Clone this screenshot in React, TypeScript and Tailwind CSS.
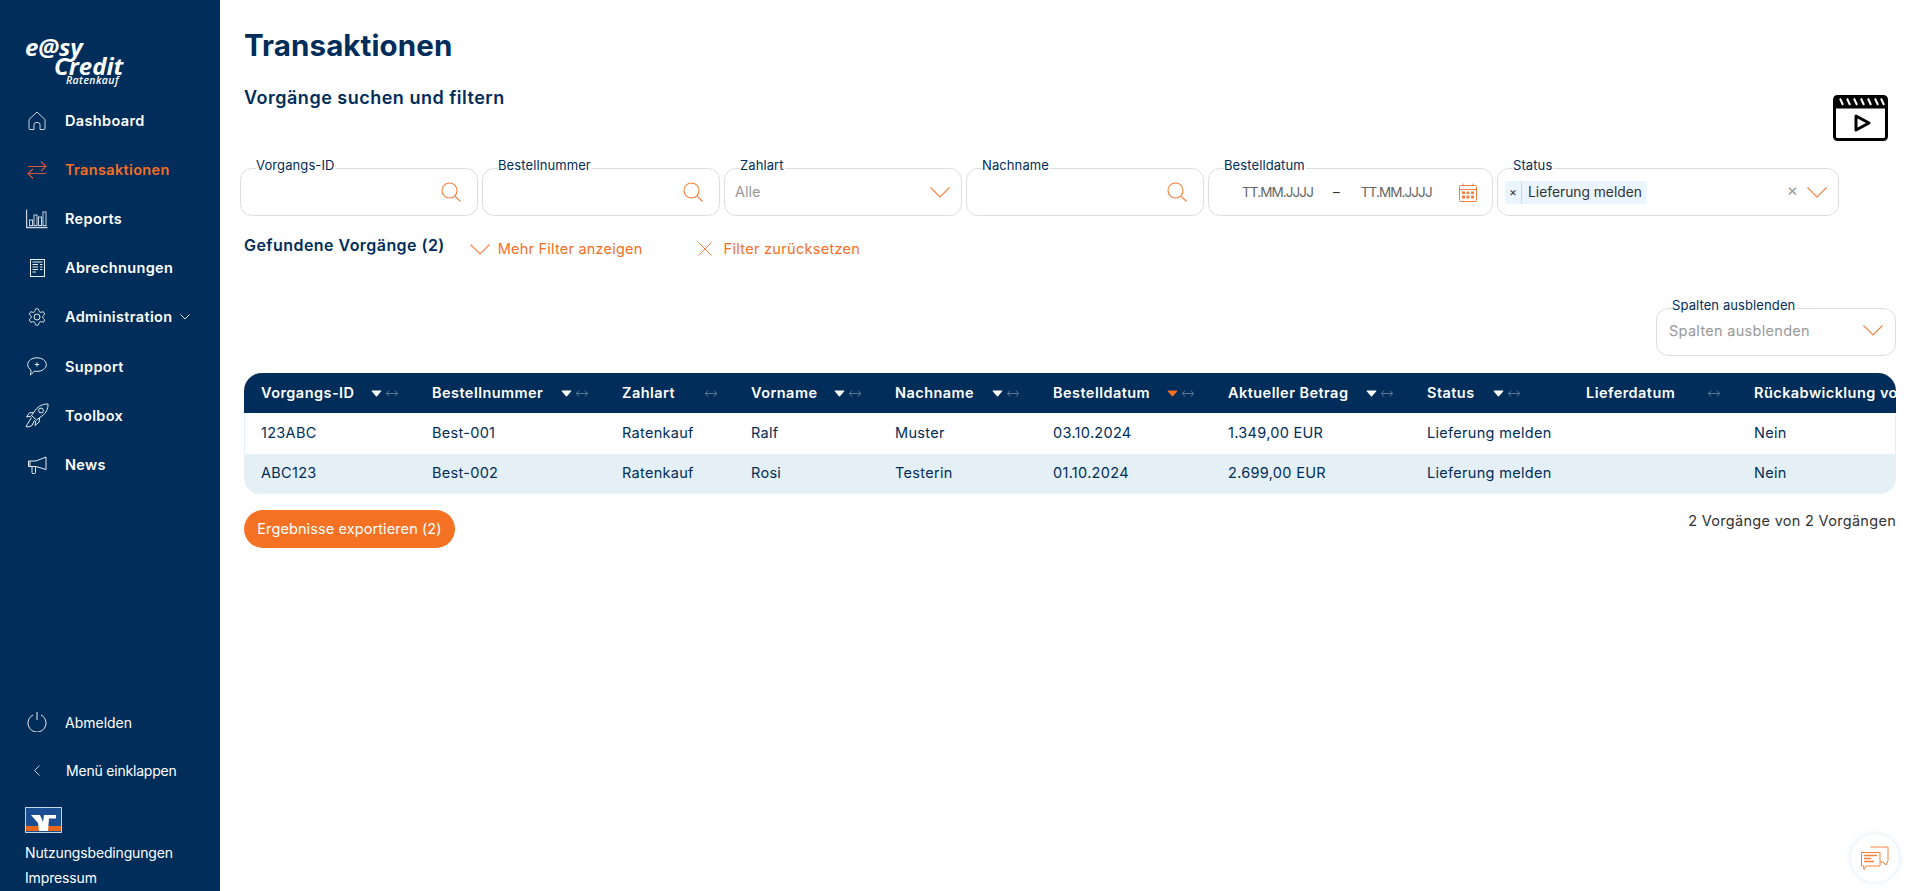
import { ReactNode } from "react";

const font = { fontFamily: "Inter, 'Noto Sans', sans-serif" };

function Chevron({ className = "" }: { className?: string }) {
  return (
    <svg viewBox="0 0 20 11" className={`h-[11px] w-5 ${className}`} fill="none" stroke="#F5803E" strokeWidth="1.1">
      <path d="M0.5 0.5 L10 10 L19.5 0.5" />
    </svg>
  );
}

function SearchIcon() {
  return (
    <svg viewBox="0 0 20 20" className="h-5 w-5" fill="none" stroke="#F5803E" strokeWidth="1.1">
      <circle cx="8.5" cy="8.5" r="7.5" />
      <path d="M13.8 13.8 L19.5 19.5" />
    </svg>
  );
}

function CalendarIcon() {
  return (
    <svg viewBox="0 0 18 19" className="h-[19px] w-[18px]" fill="none" stroke="#F5803E" strokeWidth="1">
      <rect x="0.5" y="2.5" width="17" height="16" rx="1" />
      <path d="M0.5 6.5 H17.5 M4 0.5 V3 M14 0.5 V3" />
      <g fill="#F5803E" stroke="none">
        <rect x="3" y="8.5" width="3" height="2.5" />
        <rect x="7.5" y="8.5" width="3" height="2.5" />
        <rect x="12" y="8.5" width="3" height="2.5" />
        <rect x="3" y="12.5" width="3" height="3" />
        <rect x="7.5" y="12.5" width="3" height="3" />
        <rect x="12" y="12.5" width="3" height="3" />
      </g>
    </svg>
  );
}

const navIcons: Record<string, ReactNode> = {
  home: (
    <svg viewBox="0 0 20 20" className="h-5 w-5" fill="none" stroke="#C9D4E0" strokeWidth="1">
      <path d="M2 8.5 L10 1 L18 8.5 V17.5 Q18 18.5 17 18.5 H13 V13 Q13 11.5 10 11.5 Q7 11.5 7 13 V18.5 H3 Q2 18.5 2 17.5 Z" />
    </svg>
  ),
  swap: (
    <svg viewBox="0 0 20 20" className="h-5 w-5" fill="none" stroke="#D4583A" strokeWidth="1.1">
      <path d="M1 6.5 H19 M14 1.5 L19 6.5 L14 11 M19 13.5 H1 M6 9 L1 13.5 L6 18.5" />
    </svg>
  ),
  reports: (
    <svg viewBox="0 0 22 20" className="h-5 w-[22px]" fill="none" stroke="#C9D4E0" strokeWidth="1">
      <path d="M0.5 0.5 V18.5 H21.5" strokeWidth="1.4" />
      <rect x="3.5" y="11" width="3" height="5.5" />
      <rect x="8" y="6" width="3" height="10.5" />
      <rect x="12.5" y="8" width="3" height="8.5" />
      <rect x="17" y="3" width="3" height="13.5" />
    </svg>
  ),
  bills: (
    <svg viewBox="0 0 15 18" className="h-[18px] w-[15px]" fill="none" stroke="#E8EDF2" strokeWidth="1">
      <rect x="0.5" y="0.5" width="14" height="17" />
      <path d="M2.5 3 H12.5 M2.5 5.5 H8 M10 5.5 H12.5 M2.5 8 H8 M10 8 H12.5 M2.5 10.5 H8 M10 10.5 H12.5 M2.5 13 H6" />
    </svg>
  ),
  gear: (
    <svg viewBox="0 0 24 24" className="h-5 w-5" fill="none" stroke="#E8EDF2" strokeWidth="1.2">
      <path d="M12.22 2h-.44a2 2 0 0 0-2 2v.18a2 2 0 0 1-1 1.73l-.43.25a2 2 0 0 1-2 0l-.15-.08a2 2 0 0 0-2.73.73l-.22.38a2 2 0 0 0 .73 2.73l.15.1a2 2 0 0 1 1 1.72v.51a2 2 0 0 1-1 1.74l-.15.09a2 2 0 0 0-.73 2.73l.22.38a2 2 0 0 0 2.73.73l.15-.08a2 2 0 0 1 2 0l.43.25a2 2 0 0 1 1 1.73V20a2 2 0 0 0 2 2h.44a2 2 0 0 0 2-2v-.18a2 2 0 0 1 1-1.73l.43-.25a2 2 0 0 1 2 0l.15.08a2 2 0 0 0 2.73-.73l.22-.39a2 2 0 0 0-.73-2.73l-.15-.08a2 2 0 0 1-1-1.74v-.5a2 2 0 0 1 1-1.74l.15-.09a2 2 0 0 0 .73-2.73l-.22-.38a2 2 0 0 0-2.73-.73l-.15.08a2 2 0 0 1-2 0l-.43-.25a2 2 0 0 1-1-1.73V4a2 2 0 0 0-2-2z" />
      <circle cx="12" cy="12" r="3.6" />
    </svg>
  ),
  support: (
    <svg viewBox="0 0 20 19" className="h-[19px] w-5" fill="none" stroke="#E8EDF2" strokeWidth="1">
      <path d="M10 0.8 C15 0.8 19.3 3.6 19.3 7.6 C19.3 11.6 15 14.4 10 14.4 C9 14.4 8 14.3 7.2 14.1 C6 15.6 4.6 17.4 3.4 18 C3.9 16.4 4.1 14.6 3.9 13 C1.9 11.7 0.7 9.8 0.7 7.6 C0.7 3.6 5 0.8 10 0.8 Z" />
      <path d="M10 5.3 V9.7 M7.8 7.5 H12.2" />
    </svg>
  ),
  rocket: (
    <svg viewBox="0 0 24 25" className="h-[25px] w-6" fill="none" stroke="#E8EDF2" strokeWidth="1">
      <path d="M23 1 C18 0.8 13.5 3 10.5 7 L6.5 12.5 L11.5 17 L17 13 C21 10 23.2 6 23 1 Z" />
      <circle cx="16" cy="7.5" r="2.4" />
      <path d="M8.5 9.5 L4.5 9.8 L1.5 14 L6 13.2 M14.5 15 L14.2 19 L10 22.5 L10.7 18" />
      <path d="M6.5 14.5 L1 23.5 L3 24 L7 22.5 L9.5 17.2" />
    </svg>
  ),
  news: (
    <svg viewBox="0 0 19 18" className="h-[18px] w-[19px]" fill="none" stroke="#E8EDF2" strokeWidth="1">
      <path d="M0.5 5 H8 L18 1 V13.5 L8 10.5 H0.5 Z M2 5 V10.5" />
      <path d="M4 10.5 V16.5 Q4 17.5 5 17.5 H6.5 Q7.5 17.5 7.5 16.5 V10.5" />
    </svg>
  ),
};

const navItems = [
  { label: "Dashboard", icon: "home" },
  { label: "Transaktionen", icon: "swap", active: true },
  { label: "Reports", icon: "reports" },
  { label: "Abrechnungen", icon: "bills" },
  { label: "Administration", icon: "gear", caret: true },
  { label: "Support", icon: "support" },
  { label: "Toolbox", icon: "rocket" },
  { label: "News", icon: "news" },
];

function Sidebar() {
  return (
    <aside className="flex h-full w-[220px] shrink-0 flex-col bg-[#002D5A] text-white">
      <div className="h-[96px] pl-[25px] pt-[37px] italic" style={{ fontFamily: "'Open Sans', sans-serif" }}>
        <div className="text-[24px] font-bold leading-[19px]">e@sy</div>
        <div className="ml-[29px] text-[24px] font-bold leading-[19px]">Credit</div>
        <div className="ml-[41px] text-[10.5px] font-semibold leading-[10px] tracking-[0.4px]">Ratenkauf</div>
      </div>
      <nav>
        {navItems.map((item) => (
          <div key={item.label} className="flex h-[49.2px] items-center">
            <span className="-mr-[9px] flex w-[74px] justify-center">{navIcons[item.icon]}</span>
            <span className={`text-[14.5px] font-semibold tracking-[0.35px] ${item.active ? "text-[#F46F25]" : "text-white"}`}>{item.label}</span>
            {item.caret && (
              <svg viewBox="0 0 10 6" className="ml-[8px] h-[6px] w-[10px]" fill="none" stroke="#DDE4EB" strokeWidth="1">
                <path d="M0.5 0.5 L5 5 L9.5 0.5" />
              </svg>
            )}
          </div>
        ))}
      </nav>
      <div className="mt-auto">
        <div className="flex h-[48px] items-center">
          <span className="-mr-[9px] flex w-[74px] justify-center">
            <svg viewBox="0 0 20 20" className="h-5 w-5" fill="none" stroke="#E8EDF2" strokeWidth="1">
              <path d="M6 3 A9 9 0 1 0 14 3 M10 0 V8" />
            </svg>
          </span>
          <span className="text-[14px]">Abmelden</span>
        </div>
        <div className="flex h-[48px] items-center">
          <span className="-mr-[8px] flex w-[74px] justify-center">
            <svg viewBox="0 0 6 11" className="h-[11px] w-[6px]" fill="none" stroke="#C9D4E0" strokeWidth="1">
              <path d="M5.5 0.5 L0.5 5.5 L5.5 10.5" />
            </svg>
          </span>
          <span className="text-[14px] tracking-[-0.2px]">Menü einklappen</span>
        </div>
        <div className="pl-[25px] pb-[1px] pt-[13px]">
          <svg viewBox="0 0 37 26" className="h-[26px] w-[37px]">
            <rect x="0.5" y="0.5" width="36" height="25" fill="#1B4E91" stroke="#C7D3E0" />
            <rect x="1" y="19" width="35" height="5" fill="#E8661C" />
            <path d="M6 8 H15 L18 15 L19 8 H31 V11.5 H24 L23 24 H14 L13 16 Z" fill="#fff" />
          </svg>
          <div className="mt-[7px] text-[14px] leading-[25px] tracking-[-0.15px]">Nutzungsbedingungen</div>
          <div className="text-[14px] leading-[25px] tracking-[-0.15px]">Impressum</div>
        </div>
      </div>
    </aside>
  );
}

function Field({ label, className = "", children }: { label: string; className?: string; children: ReactNode }) {
  return (
    <div className={`relative flex h-[48px] items-center rounded-[12px] border border-[#DEDEDE] bg-white ${className}`}>
      <span className="absolute -top-[12px] left-[15px] bg-white pr-[1px] text-[13px] leading-[16px] tracking-[0.1px] text-[#002D5A]">{label}</span>
      {children}
    </div>
  );
}

function Filters() {
  return (
    <div className="-ml-[4px] mt-[27px] flex gap-[4px]">
      <Field label="Vorgangs-ID" className="w-[238px] justify-end pr-[16px]">
        <SearchIcon />
      </Field>
      <Field label="Bestellnummer" className="w-[238px] justify-end pr-[16px]">
        <SearchIcon />
      </Field>
      <Field label="Zahlart" className="w-[238px] justify-between pl-[10px] pr-[11px]">
        <span className="text-[14.5px] text-[#999999]">Alle</span>
        <Chevron />
      </Field>
      <Field label="Nachname" className="w-[238px] justify-end pr-[16px]">
        <SearchIcon />
      </Field>
      <Field label="Bestelldatum" className="w-[285px] pl-[33px] pr-[15px] text-[13.5px] text-[#666666]">
        <span className="tracking-[-0.9px]">TT.MM.JJJJ</span>
        <span className="ml-[20px] text-[#333333]">–</span>
        <span className="ml-[21px] tracking-[-0.9px]">TT.MM.JJJJ</span>
        <span className="ml-auto flex">
          <CalendarIcon />
        </span>
      </Field>
      <Field label="Status" className="w-[342px] pl-[7px] pr-[11px]">
        <div className="flex h-[23px] items-center rounded-[2px] bg-[#EBF5FF]">
          <span className="flex h-full w-[17px] items-center justify-center border-r border-[#BBDDFF] text-[12px] text-[#333333]">×</span>
          <span className="pl-[6px] pr-[5px] text-[13.8px] text-[#333333]">Lieferung melden</span>
        </div>
        <span className="mb-[3px] ml-auto text-[17px] leading-none text-[#999999]">×</span>
        <Chevron className="ml-[9px]" />
      </Field>
    </div>
  );
}

const columns = [
  { label: "Vorgangs-ID", sort: "white" },
  { label: "Bestellnummer", sort: "white" },
  { label: "Zahlart" },
  { label: "Vorname", sort: "white" },
  { label: "Nachname", sort: "white" },
  { label: "Bestelldatum", sort: "orange" },
  { label: "Aktueller Betrag", sort: "white" },
  { label: "Status", sort: "white", pad: "pr-[49px]" },
  { label: "Lieferdatum" },
  { label: "Rückabwicklung von" },
];

const rows = [
  ["123ABC", "Best-001", "Ratenkauf", "Ralf", "Muster", "03.10.2024", "1.349,00 EUR", "Lieferung melden", "", "Nein"],
  ["ABC123", "Best-002", "Ratenkauf", "Rosi", "Testerin", "01.10.2024", "2.699,00 EUR", "Lieferung melden", "", "Nein"],
];

const gridCols = "grid grid-cols-[171px_190px_129px_144px_158px_175px_199px_159px_168px_159px]";

function Table() {
  return (
    <div className="mt-[17px] overflow-hidden rounded-[16px] rounded-t-[18px]">
      <div className={`${gridCols} h-[40px] items-center bg-[#002D5A] text-white`}>
        {columns.map((col, i) => (
          <div key={col.label} className={`flex items-center whitespace-nowrap pl-[17px] ${col.pad ?? (i < 9 ? "pr-[17px]" : "")}`}>
            <span className="text-[14.5px] font-semibold tracking-[0.45px]">{col.label}</span>
            {i < 9 && (
              <span className="ml-auto flex items-center gap-[4px]">
                {col.sort && (
                  <svg viewBox="0 0 11 7" className="h-[7px] w-[11px]">
                    <path d="M1 0.5 H10 Q10.8 0.5 10.3 1.3 L6 6.2 Q5.5 6.8 5 6.2 L0.7 1.3 Q0.2 0.5 1 0.5 Z" fill={col.sort === "orange" ? "#F46F25" : "#fff"} />
                  </svg>
                )}
                <svg viewBox="0 0 12 7" className="h-[7px] w-3" fill="none" stroke="#6F8BA6" strokeWidth="0.8">
                  <path d="M3 0.5 L0.5 3.5 L3 6.5 M9 0.5 L11.5 3.5 L9 6.5 M0.5 3.5 H11.5" />
                </svg>
              </span>
            )}
          </div>
        ))}
      </div>
      {rows.map((row, r) => (
        <div key={r} className={`${gridCols} h-[40.5px] items-center pb-[1px] text-[14.5px] tracking-[0.3px] text-[#002D5A] ${r === 0 ? "bg-white shadow-[inset_1px_0_0_#E5F0F6,inset_-1px_0_0_#E5F0F6]" : "bg-[#E5F0F6]"}`}>
          {row.map((cell, i) => (
            <div key={i} className="whitespace-nowrap pl-[17px]">
              {cell}
            </div>
          ))}
        </div>
      ))}
    </div>
  );
}

export default function App() {
  return (
    <div className="flex h-screen w-full overflow-hidden bg-white" style={font}>
      <Sidebar />
      <main className="relative min-w-0 flex-1 pl-6 pr-6 pt-[26px]">
        <h1 className="text-[29.5px] font-bold leading-[38px] tracking-[0.1px] text-[#002D5A]">Transaktionen</h1>
        <div className="mt-[22px] flex items-start justify-between">
          <h2 className="text-[18px] font-semibold leading-[24px] tracking-[0.5px] text-[#002D5A]">Vorgänge suchen und filtern</h2>
          <svg viewBox="0 0 55 46" className="mr-[8px] mt-[9px] h-[46px] w-[55px]" fill="none">
            <rect x="1.5" y="1.5" width="52" height="43" rx="3" stroke="#000" strokeWidth="3" />
            <rect x="1.5" y="1.5" width="52" height="12" fill="#000" />
            <path d="M7 3.5 L10 10 M14 3.5 L17 10 M21 3.5 L24 10 M28 3.5 L31 10 M35 3.5 L38 10 M42 3.5 L45 10 M48 3.5 L51 10" stroke="#fff" strokeWidth="2" />
            <path d="M23 21 L36 28 L23 35 Z" stroke="#000" strokeWidth="3" strokeLinejoin="round" />
          </svg>
        </div>
        <Filters />
        <div className="mt-[17px] flex items-start">
          <span className="text-[16px] font-semibold leading-[24px] tracking-[0.45px] text-[#002D5A]">Gefundene Vorgänge (2)</span>
          <span className="ml-[25px] mt-[6px] flex items-center text-[14.5px] leading-[20px] text-[#F46F25]">
            <Chevron className="mr-[8px]" />
            <span className="tracking-[0.22px]">Mehr Filter anzeigen</span>
          </span>
          <span className="ml-[55px] mt-[6px] flex items-center text-[14.5px] leading-[20px] text-[#F46F25]">
            <svg viewBox="0 0 14 14" className="mr-[12px] h-[14px] w-[14px]" fill="none" stroke="#F5803E" strokeWidth="1">
              <path d="M0.5 0.5 L13.5 13.5 M13.5 0.5 L0.5 13.5" />
            </svg>
            <span className="tracking-[0.3px]">Filter zurücksetzen</span>
          </span>
        </div>
        <div className="mt-[49px] flex justify-end">
          <Field label="Spalten ausblenden" className="w-[240px] justify-between pl-[12px] pr-[12px]">
            <span className="mb-[2px] text-[14.5px] tracking-[0.3px] text-[#999999]">Spalten ausblenden</span>
            <Chevron className="mb-[4px]" />
          </Field>
        </div>
        <Table />
        <div className="mt-[16px] flex items-start justify-between">
          <button className="flex h-[38px] w-[211px] items-center justify-center rounded-full bg-[#F57224] text-[14.5px] tracking-[0.1px] text-white">Ergebnisse exportieren (2)</button>
          <span className="text-[14.5px] leading-[22px] tracking-[0.3px] text-[#333333]">2 Vorgänge von 2 Vorgängen</span>
        </div>
        <div className="absolute bottom-[9px] right-[21px] flex h-[48px] w-[48px] items-center justify-center rounded-full bg-white shadow-[0_0_6px_rgba(150,190,225,0.35)]">
          <svg viewBox="0 0 28 24" className="h-[24px] w-[28px]" fill="none" stroke="#F5803E" strokeWidth="1">
            <path d="M9.5 1 H27 V14.5 L25 19 L22 16 H19" />
            <path d="M0.5 6.5 H19 V20 H5 L3 23.5 L2.5 20 H0.5 Z" />
            <path d="M3 9.5 H16 M3 12.5 H10 M3 15.5 H13" strokeWidth="1.3" />
          </svg>
        </div>
      </main>
    </div>
  );
}
